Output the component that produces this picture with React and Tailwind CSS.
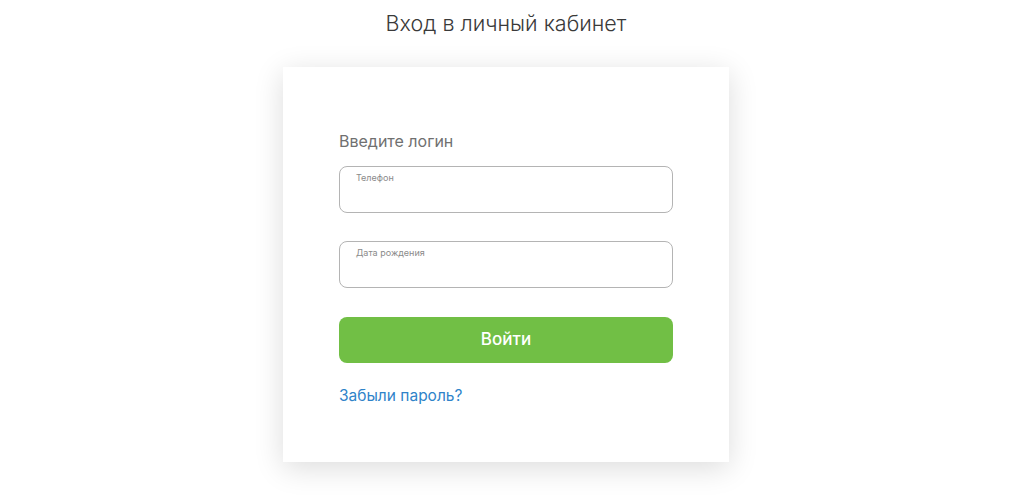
export default function App() {
  return (
    <div className="min-h-[502px] bg-white flex flex-col items-center pt-[8px] pr-[12px]" style={{ fontFamily: 'Inter, "Noto Sans", sans-serif' }}>
      <h1 className="text-[21.5px] leading-[30px] font-light text-[#3a3a3a] mb-[29px]">Вход в личный кабинет</h1>
      <div className="w-[446px] bg-white shadow-[0_6px_28px_rgba(0,0,0,0.14)] px-[56px] pt-[62px] pb-[54px]">
        <p className="text-[16px] leading-[24px] text-[#707070] mb-[13px]">Введите логин</p>
        <Field label="Телефон" />
        <div className="h-[28px]" />
        <Field label="Дата рождения" />
        <button className="mt-[29px] w-full h-[46px] rounded-[8px] bg-[#71bf45] text-white text-[17px] font-medium">
          Войти
        </button>
        <a href="#" className="block mt-[21px] text-[15.5px] leading-[24px] text-[#2f83c9]">Забыли пароль?</a>
      </div>
    </div>
  )
}

function Field({ label }) {
  return (
    <div className="h-[47px] rounded-[8px] border border-[#b4b4b4] px-[16px] pt-[5px]">
      <div className="text-[9px] leading-[12px] text-[#8a8a8a]">{label}</div>
    </div>
  )
}
